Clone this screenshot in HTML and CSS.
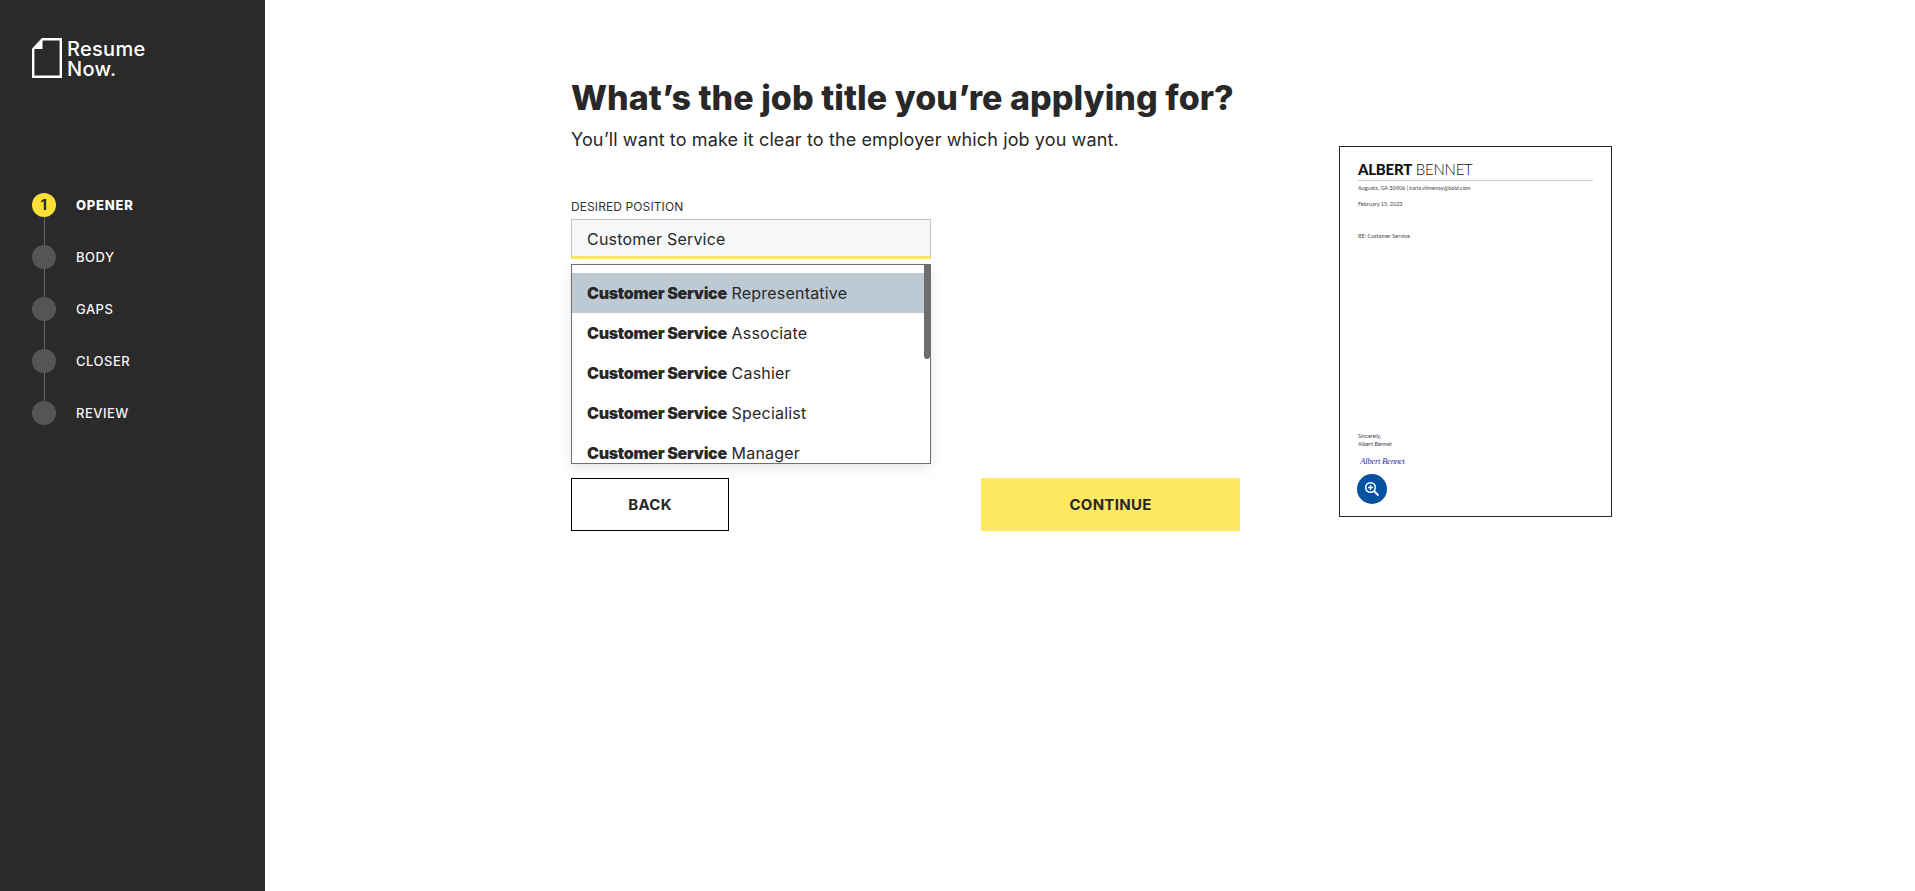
FILE: index.html
```html
<!DOCTYPE html>
<html lang="en">
<head>
    <meta charset="UTF-8">
    <title>Resume Now - Desired Position</title>
    <link rel="stylesheet" href="styles.css">
</head>
<body>
    <aside class="sidebar">
        <div class="logo">
            <svg class="logo-icon" width="30" height="40" viewBox="0 0 30 40">
                <path d="M1.2 11 L10.5 1.2 H28.8 V38.8 H1.2 Z" fill="none" stroke="#fff" stroke-width="2.4"/>
                <path d="M1.2 11 L10.5 1.2 V11 Z" fill="#fff"/>
            </svg>
            <div class="logo-text">
                <div>Resume</div>
                <div>Now.</div>
            </div>
        </div>
        <ul class="steps">
            <li class="step active"><span class="dot">1</span><span class="step-name">Opener</span></li>
            <li class="step"><span class="dot"></span><span class="step-name">Body</span></li>
            <li class="step"><span class="dot"></span><span class="step-name">Gaps</span></li>
            <li class="step"><span class="dot"></span><span class="step-name">Closer</span></li>
            <li class="step"><span class="dot"></span><span class="step-name">Review</span></li>
        </ul>
    </aside>

    <main class="main">
        <section class="content">
            <h1>What’s the job title you’re applying for?</h1>
            <p class="subtitle">You’ll want to make it clear to the employer which job you want.</p>

            <div class="form-group">
                <label class="field-label">Desired Position</label>
                <input class="field-input" type="text" value="Customer Service">
                <div class="suggestions">
                    <div class="scrollbar"></div>
                    <ul>
                        <li class="selected"><b>Customer Service</b> Representative</li>
                        <li><b>Customer Service</b> Associate</li>
                        <li><b>Customer Service</b> Cashier</li>
                        <li><b>Customer Service</b> Specialist</li>
                        <li><b>Customer Service</b> Manager</li>
                    </ul>
                </div>
            </div>

            <div class="buttons">
                <button class="btn btn-back">BACK</button>
                <button class="btn btn-continue">CONTINUE</button>
            </div>
        </section>

        <section class="preview">
            <div class="doc-name"><b>ALBERT</b> BENNET</div>
            <div class="doc-contact">Augusta, GA 30906 | karla.vilmenay@bold.com</div>
            <div class="doc-date">February 15, 2023</div>
            <div class="doc-re">RE: Customer Service</div>
            <div class="doc-bottom">
                <div>Sincerely,</div>
                <div class="doc-signed">Albert Bennet</div>
                <div class="doc-signature">Albert Bennet</div>
                <div class="zoom-btn">
                    <svg width="16" height="16" viewBox="0 0 16 16">
                        <circle cx="6.5" cy="6.5" r="4.8" fill="none" stroke="#fff" stroke-width="1.6"/>
                        <path d="M10.2 10.2 L14.5 14.5" stroke="#fff" stroke-width="2"/>
                        <path d="M4 6.5 H9 M6.5 4 V9" stroke="#fff" stroke-width="1.4"/>
                    </svg>
                </div>
            </div>
        </section>
    </main>
</body>
</html>
```

FILE: styles.css
```css
* {
    box-sizing: border-box;
}
body {
    margin: 0;
    height: 891px;
    display: flex;
    overflow: hidden;
    font-family: Inter, "Noto Sans", sans-serif;
    color: #282828;
    background-color: #fff;
}

/* sidebar */
.sidebar {
    width: 265px;
    flex-shrink: 0;
    background-color: #2a2a2a;
    padding: 38px 0 0 32px;
}
.logo {
    display: flex;
    gap: 5px;
}
.logo-text {
    font-size: 20px;
    font-weight: 500;
    letter-spacing: 0.3px;
    line-height: 20px;
    color: #fff;
    padding-top: 1px;
}
.steps {
    list-style: none;
    margin: 114px 0 0;
    padding: 0;
}
.step {
    display: flex;
    align-items: center;
    gap: 20px;
    height: 24px;
    margin-bottom: 28px;
    position: relative;
    color: #f4f4f4;
    font-size: 13px;
    font-weight: 500;
    letter-spacing: 0.5px;
    text-transform: uppercase;
}
.step:not(:last-child)::after {
    content: "";
    position: absolute;
    left: 11.5px;
    top: 24px;
    width: 1px;
    height: 28px;
    background-color: #666;
}
.dot {
    width: 24px;
    height: 24px;
    border-radius: 50%;
    background-color: #555;
    font-size: 15px;
    font-weight: 700;
    line-height: 24px;
    text-align: center;
    color: #282828;
}
.step.active .dot {
    background-color: #ffe135;
}
.step.active .step-name {
    font-weight: 800;
    letter-spacing: 0.8px;
    color: #fff;
}

/* main column */
.main {
    flex: 1;
    display: flex;
    padding: 0 0 0 306px;
}
.content {
    width: 669px;
    padding-top: 75px;
}
h1 {
    margin: 0;
    font-size: 34px;
    line-height: 46px;
    font-weight: 800;
    letter-spacing: 0.05px;
    white-space: nowrap;
}
.subtitle {
    margin: 7px 0 0;
    font-size: 18px;
    line-height: 24px;
    letter-spacing: 0.12px;
    white-space: nowrap;
}
.form-group {
    position: relative;
    width: 360px;
    margin-top: 48px;
}
.field-label {
    display: block;
    font-size: 12px;
    line-height: 14px;
    letter-spacing: 0.1px;
    text-transform: uppercase;
    color: #333;
    margin-bottom: 5px;
}
.field-input {
    display: block;
    width: 100%;
    height: 40px;
    padding: 2px 15px 0;
    border: 1px solid #c4c4c4;
    border-bottom: 3px solid #ffe65c;
    background-color: #f7f8fa;
    font-family: inherit;
    font-size: 16px;
    letter-spacing: 0.2px;
    color: #282828;
    outline: none;
}
.suggestions {
    position: absolute;
    top: 64px;
    left: 0;
    width: 360px;
    height: 200px;
    overflow: hidden;
    background-color: #fff;
    border: 1px solid #6e6e6e;
    box-shadow: 0 4px 12px rgba(0, 0, 0, 0.1);
}
.suggestions ul {
    list-style: none;
    margin: 0;
    padding: 8px 0 0;
}
.suggestions li {
    height: 40px;
    line-height: 40px;
    padding-left: 15px;
    font-size: 16px;
    letter-spacing: 0.2px;
    white-space: nowrap;
}
.suggestions li b {
    font-weight: 900;
    letter-spacing: -0.3px;
}
.suggestions li.selected {
    background-color: #bdcad4;
}
.scrollbar {
    position: absolute;
    top: 0;
    right: 0;
    width: 6px;
    height: 94px;
    border-radius: 0 0 3px 3px;
    background-color: #6e6e6e;
}
.buttons {
    display: flex;
    justify-content: space-between;
    margin-top: 219px;
}
.btn {
    height: 53px;
    font-family: inherit;
    font-size: 15px;
    font-weight: 700;
    letter-spacing: 0.3px;
    color: #282828;
}
.btn-back {
    width: 158px;
    background-color: #fff;
    border: 1px solid #000;
}
.btn-continue {
    width: 259px;
    background-color: #ffe962;
    border: none;
}

/* letter preview */
.preview {
    width: 273px;
    height: 371px;
    margin: 146px 0 0 99px;
    padding: 12px 18px 0 18px;
    border: 1px solid #282828;
    display: flex;
    flex-direction: column;
    font-family: Lato, sans-serif;
    font-size: 5.5px;
    color: #444;
}
.doc-name {
    font-size: 15px;
    line-height: 20px;
    letter-spacing: -0.25px;
    color: #111;
    border-bottom: 1px solid #ccc;
    padding-bottom: 1px;
    font-weight: 300;
}
.doc-name b {
    font-weight: 900;
}
.doc-contact {
    margin-top: 4px;
    line-height: 7px;
}
.doc-date {
    margin-top: 9px;
    line-height: 7px;
}
.doc-re {
    margin-top: 25px;
    line-height: 7px;
}
.doc-bottom {
    margin-top: auto;
    padding-bottom: 12px;
    line-height: 8px;
}
.doc-signature {
    margin: 7px 0 0 2px;
    font-family: "Liberation Serif", serif;
    font-style: italic;
    font-size: 9px;
    letter-spacing: -0.4px;
    line-height: 12px;
    color: #3b3bb0;
}
.zoom-btn {
    width: 30px;
    height: 30px;
    margin: 7px 0 0 -1px;
    border-radius: 50%;
    background-color: #0552a3;
    display: flex;
    align-items: center;
    justify-content: center;
}
```
